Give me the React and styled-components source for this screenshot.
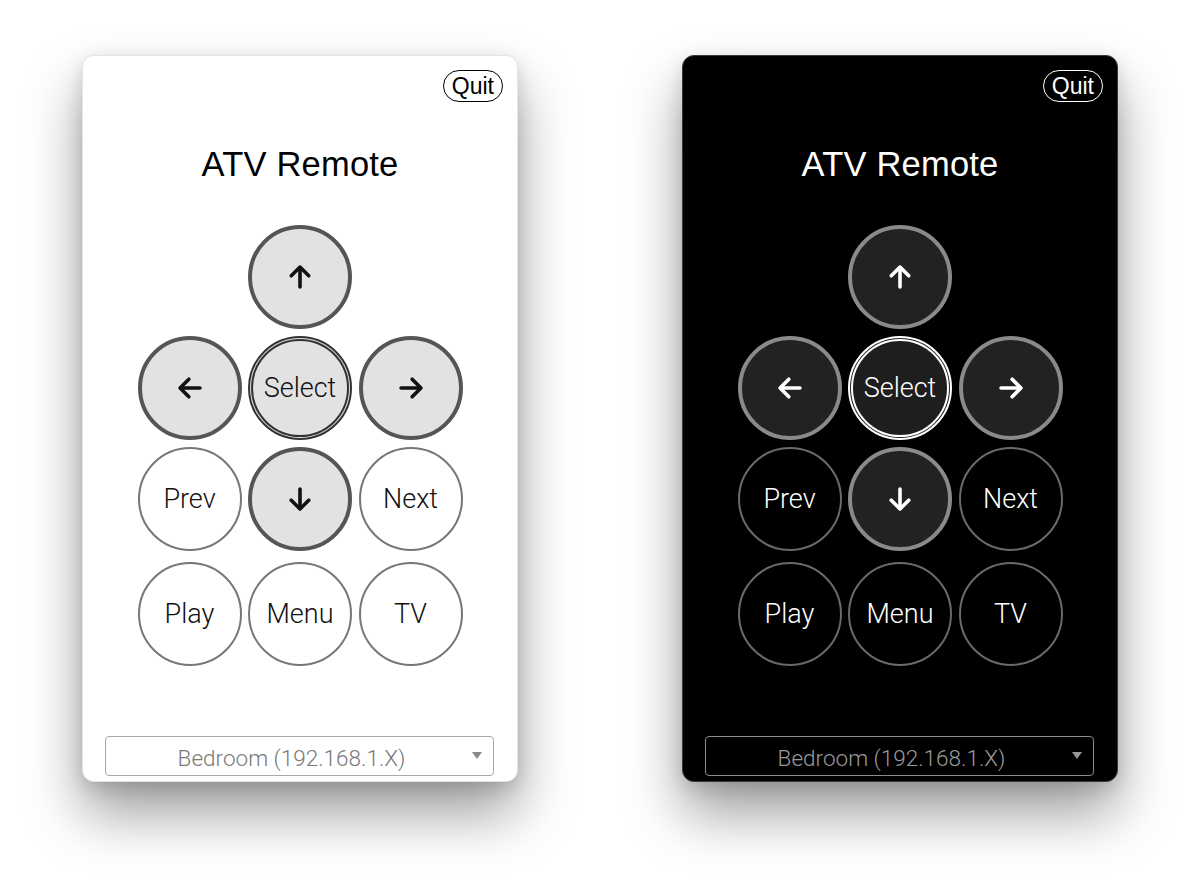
import React from "react";
import styled, { createGlobalStyle, css } from "styled-components";

const Global = createGlobalStyle`
  html, body { margin: 0; padding: 0; background: #ffffff; }
  body { font-family: "Liberation Sans", Arial, sans-serif; }
`;

const Stage = styled.div`
  display: flex;
  gap: 164px;
  padding: 55px 0 0 82px;
  height: 891px;
  box-sizing: border-box;
`;

const Window = styled.div`
  width: 436px;
  height: 727px;
  box-sizing: border-box;
  border-radius: 12px;
  display: flex;
  flex-direction: column;
  align-items: center;
  background: ${(p) => (p.$dark ? "#000" : "#fff")};
  color: ${(p) => (p.$dark ? "#fff" : "#000")};
  border: 1px solid ${(p) => (p.$dark ? "#3a3a3a" : "#e4e4e4")};
  box-shadow: 0 32px 56px rgba(0, 0, 0, 0.38), 0 6px 18px rgba(0, 0, 0, 0.14);
`;

const TopBar = styled.div`
  align-self: stretch;
  display: flex;
  justify-content: flex-end;
  padding: 14px 14px 0 0;
`;

const QuitButton = styled.button`
  height: 32px;
  padding: 0 8px;
  border-radius: 16px;
  border: 1.5px solid currentColor;
  background: transparent;
  color: inherit;
  font-family: "Liberation Sans", Arial, sans-serif;
  font-size: 23px;
  line-height: 1;
  cursor: pointer;
`;

const Title = styled.h1`
  margin: 42px 0 0;
  font-family: "Liberation Sans", Arial, sans-serif;
  font-weight: 400;
  font-size: 34.5px;
  line-height: 40px;
  letter-spacing: 0.2px;
`;

const Pad = styled.div`
  margin-top: 41px;
  display: grid;
  grid-template-columns: repeat(3, 104px);
  grid-auto-rows: 104px;
  column-gap: 6.5px;
  row-gap: 7px;
`;

const Spacer = styled.div``;

const Round = styled.button`
  width: 104px;
  height: 104px;
  box-sizing: border-box;
  border-radius: 50%;
  display: flex;
  align-items: center;
  justify-content: center;
  padding: 0;
  cursor: pointer;
  font-family: Roboto, "Liberation Sans", Arial, sans-serif;
  font-weight: 300;
  font-size: 27px;
  color: ${(p) => (p.$dark ? "#fff" : "#111")};
  ${(p) => p.$lower && css`margin-top: 4px;`}
  ${(p) =>
    p.$kind === "arrow" &&
    css`
      background: ${p.$dark ? "#222" : "#e2e2e2"};
      border: 4px solid ${p.$dark ? "#8a8a8a" : "#555"};
    `}
  ${(p) =>
    p.$kind === "select" &&
    css`
      background: ${p.$dark ? "#1e1e1e" : "#e2e2e2"};
      border: 5px double ${p.$dark ? "#fff" : "#333"};
    `}
  ${(p) =>
    p.$kind === "plain" &&
    css`
      background: ${p.$dark ? "#000" : "#fff"};
      border: 2.5px solid ${p.$dark ? "#6a6a6a" : "#777"};
    `}
`;

const DeviceSelect = styled.div`
  margin-top: auto;
  margin-bottom: 5px;
  align-self: stretch;
  margin-left: 22px;
  margin-right: 23px;
  height: 40px;
  box-sizing: border-box;
  border: 1px solid ${(p) => (p.$dark ? "#8a8a8a" : "#a8a8a8")};
  border-radius: 4px;
  display: flex;
  align-items: center;
  position: relative;
  padding: 3px 30px 0 14px;
`;

const DeviceName = styled.span`
  flex: 1;
  text-align: center;
  font-family: Roboto, "Liberation Sans", Arial, sans-serif;
  font-weight: 300;
  font-size: 22.5px;
  color: ${(p) => (p.$dark ? "#9a9a9a" : "#7a7a7a")};
`;

const Caret = styled.span`
  position: absolute;
  right: 11px;
  top: 50%;
  margin-top: -4px;
  width: 0;
  height: 0;
  border-left: 5px solid transparent;
  border-right: 5px solid transparent;
  border-top: 7px solid ${(p) => (p.$dark ? "#999" : "#888")};
`;

// Heavy arrow glyphs: chevron head plus shaft
const arrowPaths = {
  up: ["M4.5 11 12 3.5 19.5 11", "M12 4v16.5"],
  down: ["M4.5 13 12 20.5 19.5 13", "M12 3.5V20"],
  left: ["M11 4.5 3.5 12 11 19.5", "M4 12h16.5"],
  right: ["M13 4.5 20.5 12 13 19.5", "M3.5 12H20"],
};

function Arrow({ dir }) {
  return (
    <svg width="28" height="28" viewBox="0 0 24 24" fill="none" stroke="currentColor"
      strokeWidth="3.1" strokeLinecap="round" strokeLinejoin="round">
      {arrowPaths[dir].map((d) => (
        <path key={d} d={d} />
      ))}
    </svg>
  );
}

function Remote({ dark }) {
  return (
    <Window $dark={dark}>
      <TopBar>
        <QuitButton>Quit</QuitButton>
      </TopBar>
      <Title>ATV Remote</Title>
      <Pad>
        <Spacer />
        <Round $dark={dark} $kind="arrow"><Arrow dir="up" /></Round>
        <Spacer />
        <Round $dark={dark} $kind="arrow"><Arrow dir="left" /></Round>
        <Round $dark={dark} $kind="select">Select</Round>
        <Round $dark={dark} $kind="arrow"><Arrow dir="right" /></Round>
        <Round $dark={dark} $kind="plain">Prev</Round>
        <Round $dark={dark} $kind="arrow"><Arrow dir="down" /></Round>
        <Round $dark={dark} $kind="plain">Next</Round>
        <Round $dark={dark} $kind="plain" $lower>Play</Round>
        <Round $dark={dark} $kind="plain" $lower>Menu</Round>
        <Round $dark={dark} $kind="plain" $lower>TV</Round>
      </Pad>
      <DeviceSelect $dark={dark}>
        <DeviceName $dark={dark}>Bedroom (192.168.1.X)</DeviceName>
        <Caret $dark={dark} />
      </DeviceSelect>
    </Window>
  );
}

export default function App() {
  return (
    <>
      <Global />
      <Stage>
        <Remote />
        <Remote dark />
      </Stage>
    </>
  );
}
